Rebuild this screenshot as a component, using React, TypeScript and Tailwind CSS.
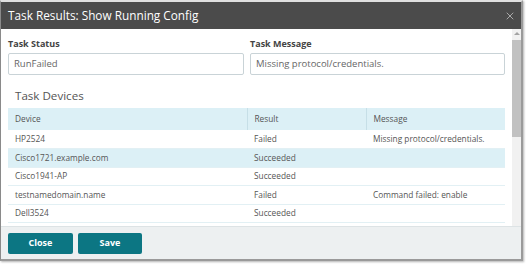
import { X } from "lucide-react";

const devices = [
  { name: "HP2524", result: "Failed", message: "Missing protocol/credentials." },
  { name: "Cisco1721.example.com", result: "Succeeded", message: "", active: true },
  { name: "Cisco1941-AP", result: "Succeeded", message: "" },
  { name: "testnamedomain.name", result: "Failed", message: "Command failed: enable" },
  { name: "Dell3524", result: "Succeeded", message: "" },
];

const App = () => {
  return (
    <div className="h-[266px] w-[527px] bg-white font-['Open_Sans',sans-serif] text-[#555]">
      <div className="flex h-[261px] w-[523px] flex-col border-t-2 border-r-2 border-b-2 border-l border-t-[#e0e0e0] border-r-[#9a9a9a] border-b-[#9a9a9a] border-l-[#8a8a8a] shadow-[1px_1px_2px_rgba(0,0,0,0.3)]">
        {/* Header */}
        <div className="flex h-[27px] shrink-0 items-center justify-between bg-[#4b4b4b] pr-[5px] pl-[7px]">
          <span className="text-[11.8px] leading-none text-white">Task Results: Show Running Config</span>
          <X className="h-[12px] w-[12px] text-[#c8c8c8]" strokeWidth={1.5} />
        </div>
        {/* Body */}
        <div className="flex min-h-0 flex-1">
          <div className="min-w-0 flex-1 overflow-hidden pt-[8px] pr-[7px] pl-[7px]">
            <div className="flex gap-[6px]">
              <div className="w-[236px]">
                <div className="mb-[2px] text-[9px] leading-[14px] font-bold text-[#444]">Task Status</div>
                <div className="flex h-[22px] items-center rounded-[2px] border border-[#c9d3d7] px-[5px] text-[9.5px] text-[#666]">
                  RunFailed
                </div>
              </div>
              <div className="flex-1">
                <div className="mb-[2px] text-[9px] leading-[14px] font-bold text-[#444]">Task Message</div>
                <div className="flex h-[22px] items-center rounded-[2px] border border-[#c9d3d7] px-[5px] text-[9.5px] text-[#666]">
                  Missing protocol/credentials.
                </div>
              </div>
            </div>
            <div className="mt-[11px] mb-[2px] pl-[7px] text-[11.6px] leading-[20px] text-[#555]">Task Devices</div>
            <table className="w-full border-collapse text-[8.3px] text-[#555]">
              <thead>
                <tr className="h-[22px] bg-[#dcf0f6] text-left">
                  <th className="w-[239px] border-r border-[#c6dfe7] pl-[7px] font-normal">Device</th>
                  <th className="w-[119px] border-r border-[#c6dfe7] pl-[7px] font-normal">Result</th>
                  <th className="pl-[7px] font-normal whitespace-nowrap">Message</th>
                </tr>
              </thead>
              <tbody>
                {devices.map((d) => (
                  <tr
                    key={d.name}
                    className={`h-[18.5px] border-b border-[#e2f0f4] ${d.active ? "bg-[#dcf0f6]" : "bg-white"}`}
                  >
                    <td className="pl-[7px] whitespace-nowrap">{d.name}</td>
                    <td className="pl-[7px] whitespace-nowrap">{d.result}</td>
                    <td className="pl-[7px] whitespace-nowrap">{d.message}</td>
                  </tr>
                ))}
              </tbody>
            </table>
          </div>
          {/* Scrollbar */}
          <div className="flex w-[9px] shrink-0 flex-col bg-[#f1f1f1]">
            <div className="flex h-[9px] items-center justify-center">
              <div className="h-0 w-0 border-x-[3px] border-b-[3px] border-x-transparent border-b-[#a3a3a3]" />
            </div>
            <div className="mt-[2px] h-[97px] bg-[#c1c1c1]" />
          </div>
        </div>
        {/* Footer */}
        <div className="flex h-[33px] shrink-0 items-center gap-[5px] border-t border-[#dde3e5] bg-[#edf0f1] px-[7px]">
          <button className="h-[21px] w-[65px] rounded-[2px] bg-[#0c7683] text-[9px] font-bold text-white">Close</button>
          <button className="h-[21px] w-[64px] rounded-[2px] bg-[#0c7683] text-[9px] font-bold text-white">Save</button>
        </div>
      </div>
    </div>
  );
};

export default App;
